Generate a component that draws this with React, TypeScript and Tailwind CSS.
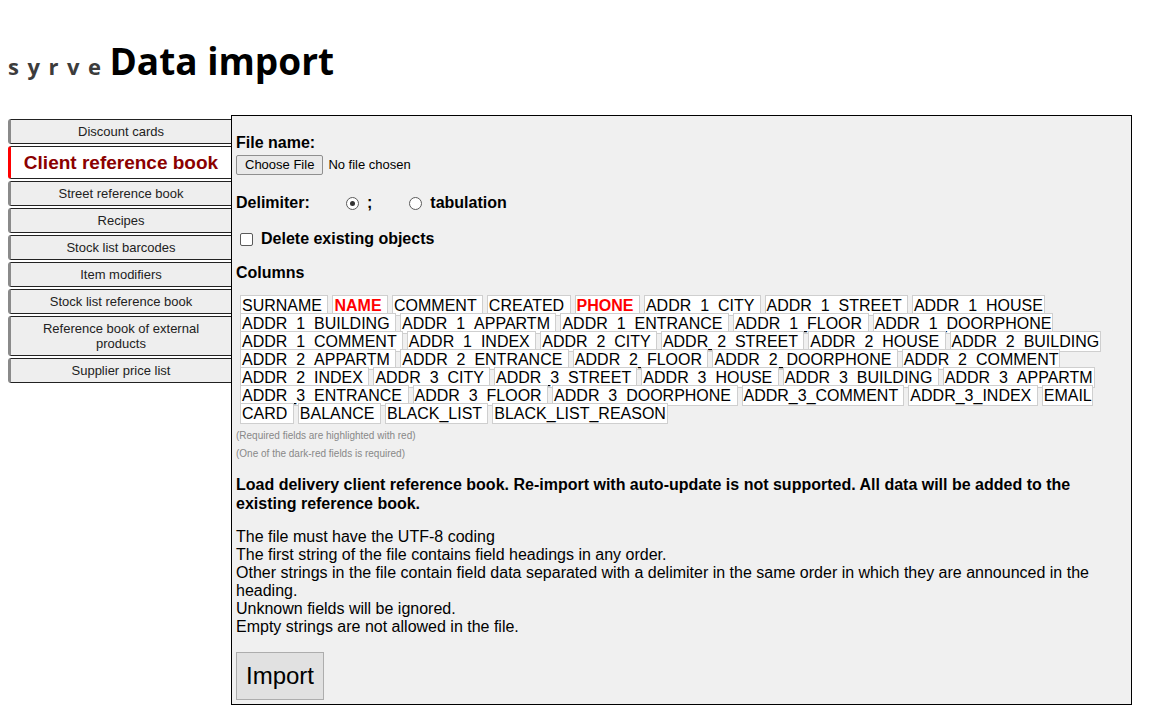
const menuItems = [
  'Discount cards',
  'Client reference book',
  'Street reference book',
  'Recipes',
  'Stock list barcodes',
  'Item modifiers',
  'Stock list reference book',
  'Reference book of external products',
  'Supplier price list',
]

const ACTIVE = 'Client reference book'

const columns = [
  'SURNAME', 'NAME', 'COMMENT', 'CREATED', 'PHONE',
  'ADDR_1_CITY', 'ADDR_1_STREET', 'ADDR_1_HOUSE', 'ADDR_1_BUILDING', 'ADDR_1_APPARTM',
  'ADDR_1_ENTRANCE', 'ADDR_1_FLOOR', 'ADDR_1_DOORPHONE', 'ADDR_1_COMMENT', 'ADDR_1_INDEX',
  'ADDR_2_CITY', 'ADDR_2_STREET', 'ADDR_2_HOUSE', 'ADDR_2_BUILDING', 'ADDR_2_APPARTM',
  'ADDR_2_ENTRANCE', 'ADDR_2_FLOOR', 'ADDR_2_DOORPHONE', 'ADDR_2_COMMENT', 'ADDR_2_INDEX',
  'ADDR_3_CITY', 'ADDR_3_STREET', 'ADDR_3_HOUSE', 'ADDR_3_BUILDING', 'ADDR_3_APPARTM',
  'ADDR_3_ENTRANCE', 'ADDR_3_FLOOR', 'ADDR_3_DOORPHONE', 'ADDR_3_COMMENT', 'ADDR_3_INDEX',
  'EMAIL', 'CARD', 'BALANCE', 'BLACK_LIST', 'BLACK_LIST_REASON',
]

const required = ['NAME', 'PHONE']

const rules = [
  'The file must have the UTF-8 coding',
  'The first string of the file contains field headings in any order.',
  'Other strings in the file contain field data separated with a delimiter in the same order in which they are announced in the heading.',
  'Unknown fields will be ignored.',
  'Empty strings are not allowed in the file.',
]

function Radio({ checked }: { checked?: boolean }) {
  return (
    <span className="flex h-[13px] w-[13px] shrink-0 items-center justify-center rounded-full border border-[#5a5a5a] bg-white">
      {checked ? <span className="h-[5px] w-[5px] rounded-full bg-[#333]" /> : null}
    </span>
  )
}

export default function App() {
  return (
    <div className="min-h-[726px] bg-white px-2 pt-[42px] font-['Liberation_Sans',Arial,sans-serif] text-black">
      <h1 className="flex items-baseline font-['Open_Sans',sans-serif] font-bold leading-[38px]">
        <span className="text-[22px] tracking-[8.5px] text-[#3c3c3c]">syrve</span>
        <span className="text-[37px]">Data import</span>
      </h1>

      <div className="mt-[30px] mr-[10px] flex items-start">
        <nav className="w-[223px] shrink-0 pt-[4px]">
          {menuItems.map((item) => {
            const active = item === ACTIVE
            return (
              <div
                key={item}
                className={
                  active
                    ? 'mb-[2px] rounded-l-[3px] border-y border-l-[3px] border-y-[#222] border-l-[#ff0000] bg-white py-1 text-center text-[19px] font-bold leading-[23px] text-[#8b0000]'
                    : 'mb-[2px] rounded-l-[3px] border-y border-l-[3px] border-y-[#222] border-l-[#8a8a8a] bg-[#eeeeee] px-6 py-1 text-center text-[13px] leading-[15px] text-[#222]'
                }
              >
                {item}
              </div>
            )
          })}
        </nav>

        <main className="flex-1 border border-black bg-[#f0f0f0] pt-[18px] pr-1 pb-[4px] pl-1">
          <div className="text-[16px] font-bold leading-[18px]">File name:</div>
          <div className="mt-[3px] flex items-center gap-[5px] text-[13px] leading-[18px]">
            <span className="flex h-[20px] items-center rounded-[2px] border border-[#8f8f8f] bg-[#e9e9e9] px-[8px]">
              Choose File
            </span>
            <span>No file chosen</span>
          </div>

          <div className="mt-[19px] flex items-center text-[16px] font-bold leading-[18px]">
            <span className="w-[110px]">Delimiter:</span>
            <Radio checked />
            <span className="ml-2">;</span>
            <span className="ml-[37px]">
              <Radio />
            </span>
            <span className="ml-2">tabulation</span>
          </div>

          <div className="mt-[18px] flex items-center text-[16px] font-bold leading-[18px]">
            <span className="ml-1 h-[13px] w-[13px] rounded-[2px] border border-[#5a5a5a] bg-white" />
            <span className="ml-2">Delete existing objects</span>
          </div>

          <div className="mt-[16px] text-[16px] font-bold leading-[18px]">Columns</div>

          <div className="mt-[15px] pl-1 text-[16px] leading-[18px]">
            {columns.map((col) => (
              <span
                key={col}
                className={
                  required.includes(col)
                    ? 'mr-1 border border-[#cfcfcf] bg-white px-px py-px font-bold text-[#ff0000]'
                    : 'mr-1 border border-[#cfcfcf] bg-white px-px py-px'
                }
              >
                {col}{' '}
              </span>
            ))}
          </div>

          <p className="mt-[4px] text-[10px] leading-[18px] text-[#888]">(Required fields are highlighted with red)</p>
          <p className="text-[10px] leading-[18px] text-[#888]">(One of the dark-red fields is required)</p>

          <p className="mt-[12px] text-[16px] font-bold leading-[19px]">
            Load delivery client reference book. Re-import with auto-update is not supported. All data will be added to
            the existing reference book.
          </p>

          <div className="mt-[15px] text-[16px] leading-[18px]">
            {rules.map((line) => (
              <div key={line}>{line}</div>
            ))}
          </div>

          <button className="mt-[16px] h-[48px] border border-[#adadad] bg-[#e1e1e1] px-[9px] text-[24px] leading-[28px]">
            Import
          </button>
        </main>
      </div>
    </div>
  )
}
